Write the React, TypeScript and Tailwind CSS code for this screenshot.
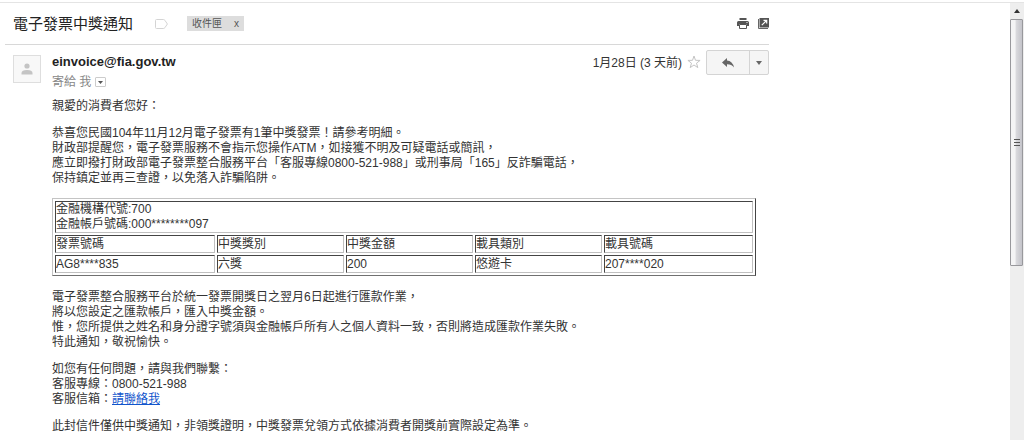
import type { ReactNode } from "react";

const raised = "border border-t-[#c4c4c4] border-l-[#c4c4c4] border-r-[#444444] border-b-[#707070]";
const sunken =
  "h-[18px] border border-t-[#444444] border-l-[#444444] border-r-[#c0c0c0] border-b-[#c0c0c0] p-0 text-left align-middle font-normal";

const columns = [
  { title: "發票號碼", value: "AG8****835", width: "w-[160px]" },
  { title: "中獎獎別", value: "六獎", width: "w-[127px]" },
  { title: "中獎金額", value: "200", width: "w-[127px]" },
  { title: "載具類別", value: "悠遊卡", width: "w-[127px]" },
  { title: "載具號碼", value: "207****020", width: "w-auto" },
];

function Lines({ children }: { children: ReactNode[] }) {
  return (
    <p>
      {children.map((line, i) => (
        <span key={i} className="block">
          {line}
        </span>
      ))}
    </p>
  );
}

function LabelIcon() {
  return (
    <svg width="13" height="10" viewBox="0 0 13 10" fill="none" stroke="#d4d4d4" aria-hidden="true">
      <path d="M1.5.5h6.8q1 0 1.6.8L12.4 5 9.900 8.700q-.6.8-1.600.8H1.500q-1 0-1-1v-7q0-1 1-1z" />
    </svg>
  );
}

function PrintIcon() {
  return (
    <svg width="12" height="11" viewBox="0 0 12 11" aria-hidden="true">
      <path fill="#555" d="M2.500 0h7v2h-7zM1.500 3h9Q12 3 12 4.500V8h-2V6H2v2H0V4.500Q0 3 1.500 3z" />
      <path fill="none" stroke="#555" d="M2.500 6.500h7v4h-7z" />
      <path fill="#fff" d="M9.500 4h1v1h-1z" />
    </svg>
  );
}

function NewWindowIcon() {
  return (
    <svg width="11" height="11" viewBox="0 0 11 11" aria-hidden="true">
      <path fill="none" stroke="#666" d="M.5 1v9.500H10" />
      <path fill="#555" d="M1.500 0H11v9.500H1.500z" />
      <path fill="none" stroke="#fff" strokeWidth="1.200" d="M5.500 2.300h3.200v3.200M8.500 2.500 3.800 7.200" />
    </svg>
  );
}

function Header() {
  return (
    <header className="flex h-[42px] items-center border-b border-[#d8d8d8] pl-2">
      <h1 className="text-[15px] leading-5 text-[#222222]">電子發票中獎通知</h1>
      <button type="button" aria-label="標籤" className="ml-[22px]">
        <LabelIcon />
      </button>
      <div className="ml-[19px] flex h-[15px] w-[57px] items-center justify-between bg-[#dddddd] px-[5px] text-[10px] leading-[15px] text-[#555555]">
        <span>收件匣</span>
        <button type="button" aria-label="移除標籤">
          x
        </button>
      </div>
      <div className="ml-auto flex items-center gap-[9px]">
        <button type="button" aria-label="列印">
          <PrintIcon />
        </button>
        <button type="button" aria-label="在新視窗中開啟">
          <NewWindowIcon />
        </button>
      </div>
    </header>
  );
}

function Sender() {
  return (
    <div className="flex items-start pt-[5px]">
      <div className="mt-[5px] ml-2 flex size-7 items-center justify-center border border-[#dedede] bg-[#f8f8f8]">
        <svg width="12" height="12" viewBox="0 0 12 12" fill="#c4c4c4" aria-hidden="true">
          <circle cx="6" cy="3" r="2.600" />
          <path d="M.5 11.500V10q0-3 5.500-3t5.500 3v1.500z" />
        </svg>
      </div>
      <div className="ml-[11px] pt-1">
        <div className="text-[13px] leading-4 font-bold text-[#222222]">einvoice@fia.gov.tw</div>
        <div className="mt-1 flex items-center gap-1 text-[12px] leading-4 text-[#888888]">
          寄給 我
          <button
            type="button"
            aria-label="顯示詳細資料"
            className="flex h-[10px] w-[11px] items-center justify-center rounded-[1px] border border-[#cccccc]"
          >
            <svg width="5" height="3" viewBox="0 0 5 3" fill="#555" aria-hidden="true">
              <path d="M0 0h5L2.500 3z" />
            </svg>
          </button>
        </div>
      </div>
      <time className="mt-[5px] ml-auto text-[12px] leading-4">1月28日 (3 天前)</time>
      <button type="button" aria-label="加上星號" className="mt-[5px] ml-[5px]">
        <svg width="14" height="14" viewBox="0 0 14 14" fill="none" stroke="#c4c4c4" aria-hidden="true">
          <path d="m7 1 1.500 4.300 4.600.1-3.600 2.800 1.300 4.400L7 10l-3.800 2.600 1.300-4.400L.9 5.400l4.600-.1z" />
        </svg>
      </button>
      <div className="ml-[5px] flex h-[25px] w-[63px] rounded-[2px] border border-[#d4d4d4] bg-[#f5f5f5]">
        <button type="button" aria-label="回覆" className="flex flex-1 items-center justify-center">
          <svg width="12" height="10" viewBox="0 0 12 10" fill="#666" aria-hidden="true">
            <path d="M5 0v2.600Q10.500 3 12 9.500 9.500 6.200 5 6.300V9L0 4.500z" />
          </svg>
        </button>
        <button
          type="button"
          aria-label="更多"
          className="flex w-[19px] items-center justify-center border-l border-[#d4d4d4]"
        >
          <svg width="6" height="4" viewBox="0 0 6 4" fill="#666" aria-hidden="true">
            <path d="M0 0h6L3 4z" />
          </svg>
        </button>
      </div>
    </div>
  );
}

function PrizeTable() {
  return (
    <table className={`mb-0.5 w-full border-separate border-spacing-[2px] leading-[15px] ${raised}`}>
      <tbody>
        <tr>
          <td colSpan={5} className={sunken}>
            金融機構代號:700
            <br />
            金融帳戶號碼:000********097
          </td>
        </tr>
        <tr>
          {columns.map((c) => (
            <th key={c.title} scope="col" className={`${sunken} ${c.width}`}>
              {c.title}
            </th>
          ))}
        </tr>
        <tr>
          {columns.map((c) => (
            <td key={c.title} className={sunken}>
              {c.value}
            </td>
          ))}
        </tr>
      </tbody>
    </table>
  );
}

function Scrollbar() {
  return (
    <div aria-hidden="true" className="flex w-[14px] shrink-0 flex-col bg-[#eeeeee]">
      <div className="flex h-4 items-center justify-center">
        <svg width="6" height="4" viewBox="0 0 6 4" fill="#333">
          <path d="M3 0 6 4H0z" />
        </svg>
      </div>
      <div className="mr-px flex h-[247px] items-center justify-center rounded-[1px] border border-[#98989c] bg-linear-to-r from-[#f4f4f5] from-35% via-[#d8d8dc] via-50% to-[#c4c4ca]">
        <svg width="6" height="8" viewBox="0 0 6 8" fill="#555">
          <path d="M0 0h6v1H0zM0 3h6v1H0zM0 6h6v1H0z" />
        </svg>
      </div>
    </div>
  );
}

export default function App() {
  return (
    <div
      lang="zh-TW"
      className="flex min-h-screen flex-col bg-white font-['Liberation_Sans','Noto_Sans_CJK_TC',sans-serif] text-[12px] leading-[15px] text-[#333333]"
    >
      <div className="h-[3px] border-b border-[#e4e4e4]" />
      <div className="flex flex-1">
        <main className="min-w-0 flex-1 pb-1 pl-[5px]">
          <div className="max-w-[764px]">
            <Header />
            <Sender />
            <article className="mt-[9px] mr-[13px] ml-[47px] flex flex-col gap-3">
              <p>親愛的消費者您好：</p>
              <Lines>
                {[
                  "恭喜您民國104年11月12月電子發票有1筆中獎發票！請參考明細。",
                  "財政部提醒您，電子發票服務不會指示您操作ATM，如接獲不明及可疑電話或簡訊，",
                  "應立即撥打財政部電子發票整合服務平台「客服專線0800-521-988」或刑事局「165」反詐騙電話，",
                  "保持鎮定並再三查證，以免落入詐騙陷阱。",
                ]}
              </Lines>
              <PrizeTable />
              <Lines>
                {[
                  "電子發票整合服務平台於統一發票開獎日之翌月6日起進行匯款作業，",
                  "將以您設定之匯款帳戶，匯入中獎金額。",
                  "惟，您所提供之姓名和身分證字號須與金融帳戶所有人之個人資料一致，否則將造成匯款作業失敗。",
                  "特此通知，敬祝愉快。",
                ]}
              </Lines>
              <Lines>
                {[
                  "如您有任何問題，請與我們聯繫：",
                  "客服專線：0800-521-988",
                  <>
                    客服信箱：
                    <a href="#contact" className="text-[#1155cc] underline">
                      請聯絡我
                    </a>
                  </>,
                ]}
              </Lines>
              <p>此封信件僅供中獎通知，非領獎證明，中獎發票兌領方式依據消費者開獎前實際設定為準。</p>
            </article>
          </div>
        </main>
        <Scrollbar />
      </div>
    </div>
  );
}
